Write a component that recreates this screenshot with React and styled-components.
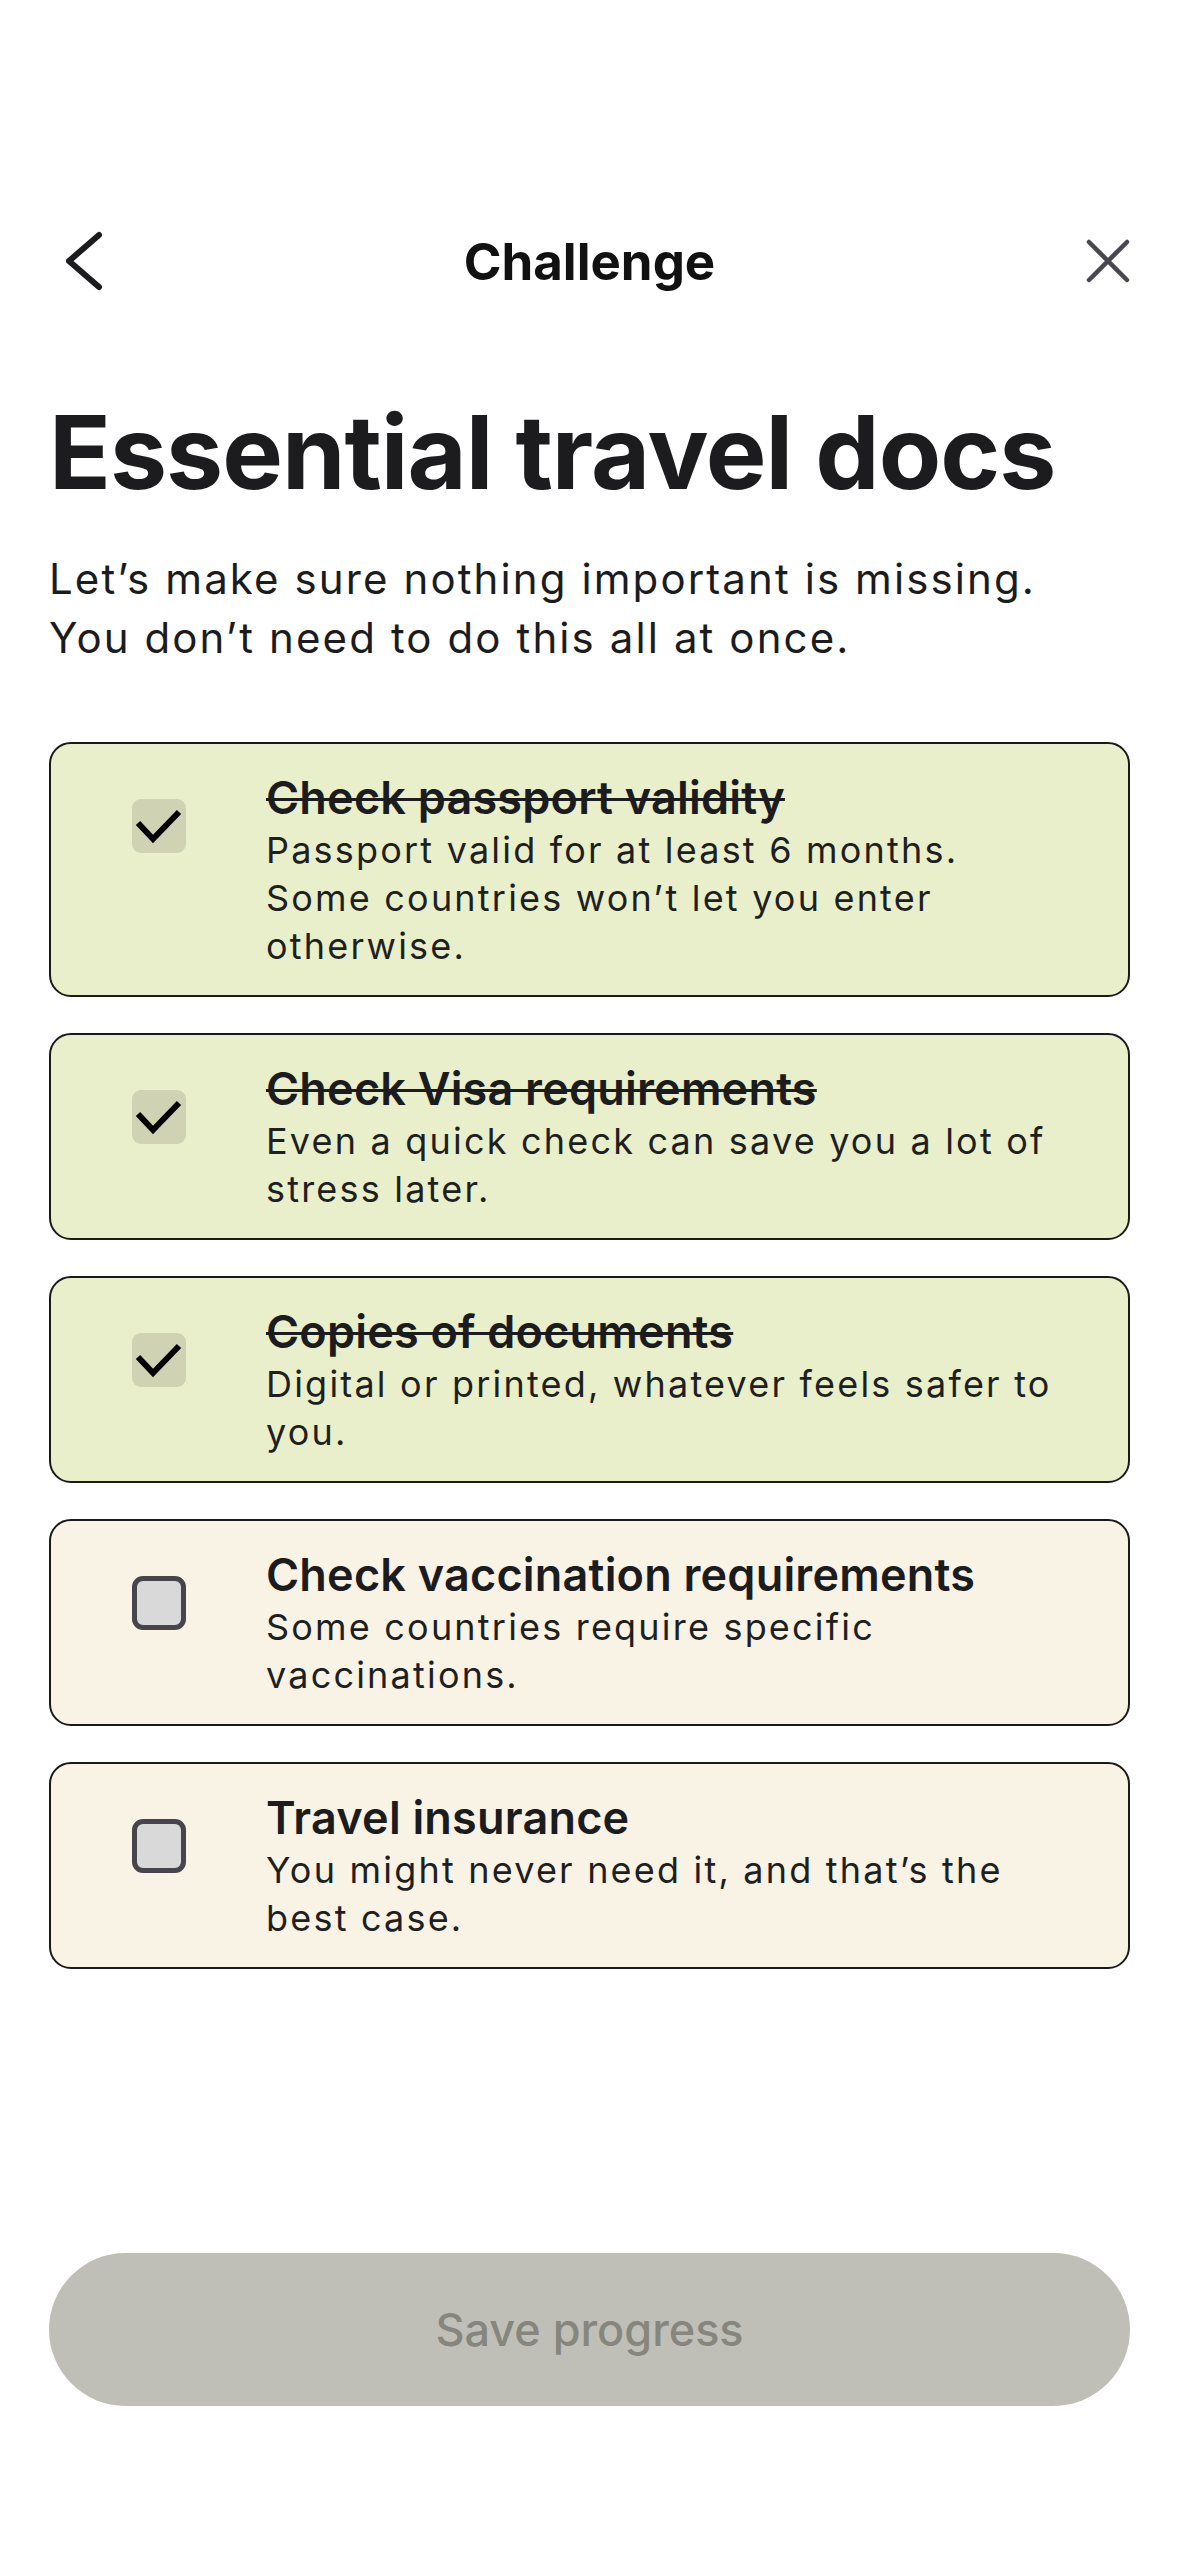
import React, { useState } from "react";
import styled, { createGlobalStyle } from "styled-components";

const GlobalStyle = createGlobalStyle`
  html, body {
    margin: 0;
    padding: 0;
    background: #ffffff;
  }
  body {
    font-family: Inter, "Noto Sans", sans-serif;
    color: #1c1c1e;
  }
`;

const Page = styled.div`
  width: 1179px;
  min-height: 2556px;
  box-sizing: border-box;
  padding: 211px 49px 0;
  display: flex;
  flex-direction: column;
`;

const Header = styled.header`
  height: 100px;
  display: grid;
  grid-template-columns: 100px 1fr 100px;
  align-items: center;
`;

const IconButton = styled.button`
  background: none;
  border: none;
  padding: 0;
  width: 100px;
  height: 100px;
  display: flex;
  align-items: center;
  justify-content: ${(p) => (p.right ? "flex-end" : "flex-start")};
  cursor: pointer;
`;

const HeaderTitle = styled.h2`
  margin: 0;
  text-align: center;
  font-size: 51px;
  font-weight: 700;
  color: #111111;
`;

const Title = styled.h1`
  margin: 76px 0 0;
  font-size: 102px;
  line-height: 130px;
  font-weight: 700;
  letter-spacing: -1px;
  color: #1c1c1e;
`;

const Subtitle = styled.p`
  margin: 32px 0 0;
  font-size: 42px;
  line-height: 59px;
  font-weight: 400;
  letter-spacing: 2.1px;
  color: #1c1c1e;
`;

const List = styled.div`
  margin-top: 75px;
  display: flex;
  flex-direction: column;
  gap: 36px;
`;

const Card = styled.label`
  display: flex;
  align-items: flex-start;
  gap: 80px;
  box-sizing: border-box;
  padding: 26px 30px 25px 81px;
  border: 2px solid #1a1a1a;
  border-radius: 22px;
  background: ${(p) => (p.done ? "#e8efca" : "#f9f3e5")};
  cursor: pointer;
`;

const Box = styled.span`
  flex: none;
  width: 54px;
  height: 54px;
  margin-top: 29px;
  box-sizing: border-box;
  border-radius: ${(p) => (p.done ? "9px" : "11px")};
  background: ${(p) => (p.done ? "#cfd3b4" : "#d9d9d9")};
  border: ${(p) => (p.done ? "none" : "5px solid #47444c")};
  svg {
    display: block;
  }
`;

const Texts = styled.div`
  width: 800px;
  display: flex;
  flex-direction: column;
`;

const ItemTitle = styled.span`
  font-size: 45px;
  line-height: 56px;
  font-weight: 600;
  letter-spacing: 0.2px;
  color: #1c1c1e;
  text-decoration: ${(p) => (p.done ? "line-through" : "none")};
  text-decoration-thickness: 3px;
`;

const ItemText = styled.span`
  font-size: 36px;
  line-height: 48px;
  letter-spacing: 2.2px;
  color: #1f1f1f;
`;

const Spacer = styled.div`
  flex: 1;
`;

const SaveButton = styled.button`
  margin-top: 284px;
  width: 100%;
  height: 153px;
  border: none;
  border-radius: 77px;
  background: #bfbfb7;
  color: #86867f;
  font-family: Inter, sans-serif;
  font-size: 45px;
  font-weight: 500;
`;

const items = [
  {
    title: "Check passport validity",
    text: "Passport valid for at least 6 months. Some countries won\u2019t let you enter otherwise.",
    done: true,
  },
  {
    title: "Check Visa requirements",
    text: "Even a quick check can save you a lot of stress later.",
    done: true,
  },
  {
    title: "Copies of documents",
    text: "Digital or printed, whatever feels safer to you.",
    done: true,
  },
  {
    title: "Check vaccination requirements",
    text: "Some countries require specific vaccinations.",
    done: false,
  },
  {
    title: "Travel insurance",
    text: "You might never need it, and that\u2019s the best case.",
    done: false,
  },
];

const App = () => {
  const [list, setList] = useState(items);
  const toggle = (i) =>
    setList(list.map((it, j) => (j === i ? { ...it, done: !it.done } : it)));

  return (
    <>
      <GlobalStyle />
      <Page>
        <Header>
          <IconButton aria-label="Back">
            <svg width="60" height="62" viewBox="0 0 60 62" fill="none">
              <path d="M50 5 L20 31 L50 57" stroke="#1c1c1e" strokeWidth="6" strokeLinecap="round" strokeLinejoin="round" />
            </svg>
          </IconButton>
          <HeaderTitle>Challenge</HeaderTitle>
          <IconButton right aria-label="Close">
            <svg width="44" height="44" viewBox="0 0 44 44" fill="none">
              <path d="M3 3 L41 41 M41 3 L3 41" stroke="#48464f" strokeWidth="4.5" strokeLinecap="round" />
            </svg>
          </IconButton>
        </Header>
        <Title>Essential travel docs</Title>
        <Subtitle>
          Let’s make sure nothing important is missing.
          <br />
          You don’t need to do this all at once.
        </Subtitle>
        <List>
          {list.map((it, i) => (
            <Card key={it.title} done={it.done} onClick={() => toggle(i)}>
              <Box done={it.done}>
                {it.done && (
                  <svg width="54" height="54" viewBox="0 0 54 54" fill="none">
                    <path d="M6 24 L21 40 L47 13" stroke="#000" strokeWidth="6" strokeLinejoin="miter" />
                  </svg>
                )}
              </Box>
              <Texts>
                <ItemTitle done={it.done}>{it.title}</ItemTitle>
                <ItemText>{it.text}</ItemText>
              </Texts>
            </Card>
          ))}
        </List>
        <SaveButton>Save progress</SaveButton>
        <Spacer />
      </Page>
    </>
  );
};

export default App;
